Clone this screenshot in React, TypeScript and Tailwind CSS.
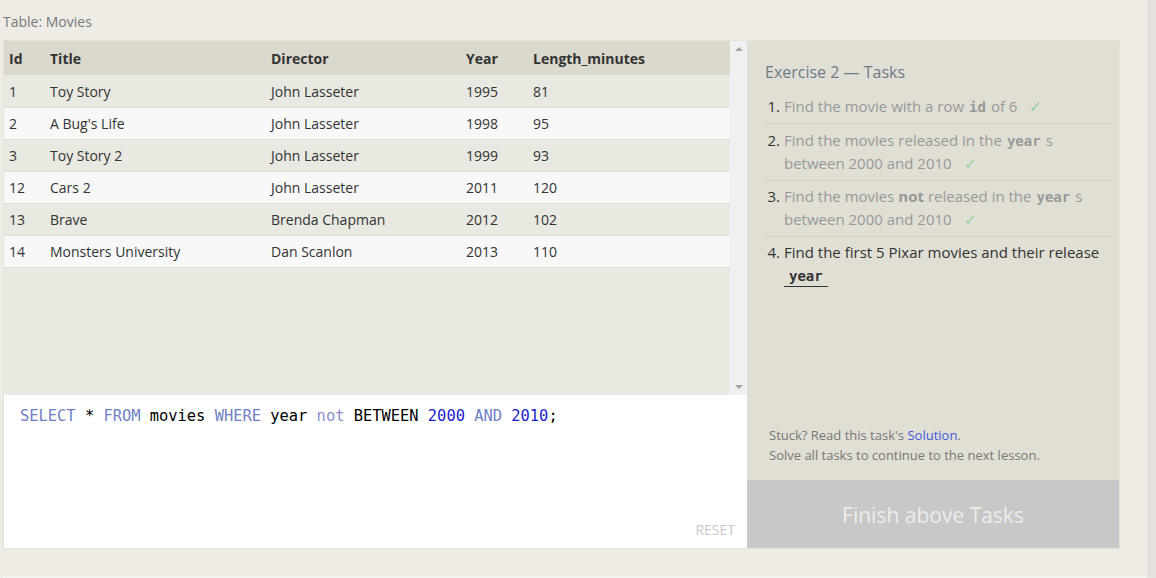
import React from "react"

const movies = [
  { id: 1, title: "Toy Story", director: "John Lasseter", year: 1995, length: 81 },
  { id: 2, title: "A Bug's Life", director: "John Lasseter", year: 1998, length: 95 },
  { id: 3, title: "Toy Story 2", director: "John Lasseter", year: 1999, length: 93 },
  { id: 12, title: "Cars 2", director: "John Lasseter", year: 2011, length: 120 },
  { id: 13, title: "Brave", director: "Brenda Chapman", year: 2012, length: 102 },
  { id: 14, title: "Monsters University", director: "Dan Scanlon", year: 2013, length: 110 },
]

function Check() {
  return <span className="ml-3 text-[#8dd49a]">✓</span>
}

function Code({ children, dark }: { children: React.ReactNode; dark?: boolean }) {
  return (
    <code
      className={`mx-[5px] font-['DejaVu_Sans_Mono',monospace] text-[14px] font-bold leading-none ${
        dark ? "text-[#333]" : "text-[#999]"
      }`}
    >
      {children}
    </code>
  )
}

export default function App() {
  return (
    <div className="flex h-screen w-full bg-[#efece5] font-['Open_Sans',sans-serif]">
      <div className="flex flex-1 flex-col pl-[3px]">
        {/* Table label */}
        <div className="h-[40px] pt-[11px] text-[14px] text-[#777]">Table: Movies</div>

        {/* Exercise card */}
        <div className="flex w-[1117px] border border-[#e3e1d8]">
          {/* Left side */}
          <div className="flex w-[743px] flex-col">
            <div className="flex h-[354px]">
              <div className="flex-1 bg-[#e9e8e1]">
                <table className="w-full border-collapse text-left text-[14px] text-[#333]">
                  <thead>
                    <tr className="h-[34px] bg-[#dbd9cd]">
                      <th className="w-[46px] pl-[5px] font-bold">Id</th>
                      <th className="w-[221px] font-bold">Title</th>
                      <th className="w-[195px] font-bold">Director</th>
                      <th className="w-[67px] font-bold">Year</th>
                      <th className="font-bold">Length_minutes</th>
                    </tr>
                  </thead>
                  <tbody>
                    {movies.map((m, i) => (
                      <tr
                        key={m.id}
                        className={`h-[32px] border-b border-[#dddcd5] ${
                          i % 2 === 0 ? "bg-[#e9e8e1]" : "bg-[#f8f8f8]"
                        }`}
                      >
                        <td className="pl-[5px] pt-[1px]">{m.id}</td>
                        <td className="pt-[1px]">{m.title}</td>
                        <td className="pt-[1px]">{m.director}</td>
                        <td className="pt-[1px]">{m.year}</td>
                        <td className="pt-[1px]">{m.length}</td>
                      </tr>
                    ))}
                  </tbody>
                </table>
              </div>
              {/* scrollbar */}
              <div className="flex w-[17px] flex-col items-center justify-between bg-[#f0f0f0] py-[6px]">
                <div className="h-0 w-0 border-x-[4px] border-b-[4px] border-x-transparent border-b-[#a3a3a3]" />
                <div className="h-0 w-0 border-x-[4px] border-t-[4px] border-x-transparent border-t-[#a3a3a3]" />
              </div>
            </div>

            {/* Editor */}
            <div className="flex h-[153px] flex-col justify-between bg-white pb-[8px] pl-[16px] pr-[12px] pt-[11px]">
              <pre className="font-['DejaVu_Sans_Mono',monospace] text-[15.4px] leading-[20px] text-black">
                <span className="text-[#6f7fc4]">SELECT</span> * <span className="text-[#6f7fc4]">FROM</span> movies{" "}
                <span className="text-[#6f7fc4]">WHERE</span> year <span className="text-[#8b8fcc]">not</span> BETWEEN{" "}
                <span className="text-[#1c1ccf]">2000</span> <span className="text-[#6f7fc4]">AND</span>{" "}
                <span className="text-[#1c1ccf]">2010</span>;
              </pre>
              <div className="self-end text-[14px] text-[#c8c8c8]">RESET</div>
            </div>
          </div>

          {/* Right side */}
          <div className="flex flex-1 flex-col">
            <div className="flex h-[439px] flex-col justify-between bg-[#e1dfd4] pb-[15px] pl-[18px] pr-[7px] pt-[19px]">
              <div>
                <div className="text-[16px] text-[#6c7b8a]">Exercise 2 — Tasks</div>
                <ol className="mt-[11px] text-[15px] leading-[23px]">
                  <li className="flex border-b border-[#d2d0c5] pb-[5px]">
                    <span className="w-[15px] shrink-0 text-right text-[#333]">1.</span>
                    <span className="pl-[4px] text-[#999]">
                      Find the movie with a row<Code>id</Code>of 6<Check />
                    </span>
                  </li>
                  <li className="flex border-b border-[#d2d0c5] py-[5px]">
                    <span className="w-[15px] shrink-0 text-right text-[#333]">2.</span>
                    <span className="pl-[4px] text-[#999]">
                      Find the movies released in the<Code>year</Code>s between 2000 and 2010
                      <Check />
                    </span>
                  </li>
                  <li className="flex border-b border-[#d2d0c5] pb-[5px] pt-[4px]">
                    <span className="w-[15px] shrink-0 text-right text-[#333]">3.</span>
                    <span className="pl-[4px] text-[#999]">
                      Find the movies <b>not</b> released in the<Code>year</Code>s between 2000 and
                      2010
                      <Check />
                    </span>
                  </li>
                  <li className="flex pt-[4px]">
                    <span className="w-[15px] shrink-0 text-right text-[#333]">4.</span>
                    <span className="pl-[4px] text-[#333]">
                      Find the first 5 Pixar movies and their release{" "}
                      <span className="border-b border-[#333] pb-[1px]">
                        <Code dark>year</Code>
                      </span>
                    </span>
                  </li>
                </ol>
              </div>
              <div className="pl-[4px] text-[13px] leading-[20px] text-[#777]">
                <div>
                  Stuck? Read this task's <span className="text-[#3b5bdb]">Solution</span>.
                </div>
                <div>Solve all tasks to continue to the next lesson.</div>
              </div>
            </div>
            <div className="flex h-[68px] items-center justify-center bg-[#c8c8c8] pt-[3px] text-[21px] text-[#ececec]">
              Finish above Tasks
            </div>
          </div>
        </div>
        <div className="flex-1" />
        <div className="h-[2px] bg-[#f4f2ee]" />
      </div>
      <div className="w-[9px] bg-[#e6e2df]" />
    </div>
  )
}
